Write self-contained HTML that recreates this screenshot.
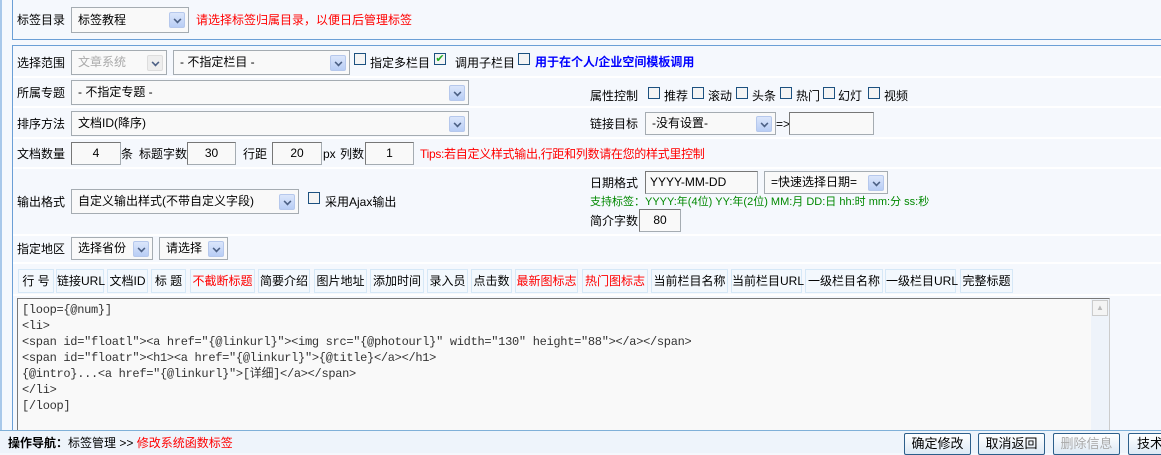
<!DOCTYPE html>
<html><head><meta charset="utf-8"><style>
*{margin:0;padding:0;box-sizing:border-box}
body{width:1161px;height:453px;overflow:hidden;background:#f5f8fd;font:12px "Liberation Sans","WenQuanYi Zen Hei","Noto Sans CJK SC",sans-serif;color:#000;position:relative}
.a{position:absolute;white-space:nowrap;line-height:14px}
.box{position:absolute;border:1px solid #6b9fd6;background:#f5f8fd}
.sel{position:absolute;border:1px solid #a5acb2;background:#f9f9f9;padding:4px 0 0 6px;white-space:nowrap;line-height:15px;overflow:hidden}
.sel i{position:absolute;right:3px;top:50%;margin-top:-8px;width:16px;height:16px;border:1px solid #b6c8ec;background:linear-gradient(#dbe6fb,#b8cdf5);border-radius:2px}
.sel i:after{content:"";position:absolute;left:4px;top:3px;width:5px;height:5px;border-right:2px solid #4d6185;border-bottom:2px solid #4d6185;transform:rotate(45deg) scale(.8)}
.inp{position:absolute;border:1px solid #a5acb2;border-top-color:#777;border-left-color:#777;background:#f9f9f9;text-align:center;line-height:20px}
.cb{position:absolute;width:12px;height:12px;border:1px solid #1c5180;background:#f4f4f4}
.sep{position:absolute;left:13px;right:0;height:2px;background:#fff}
.btn{position:absolute;top:269px;height:24px;border:1px solid #d6e8f7;background:#f3f8fd;line-height:22px;text-align:center;white-space:nowrap}
.bb{position:absolute;top:433px;height:22px;width:67px;border:1px solid #2d5f8b;border-radius:2px;background:linear-gradient(#fff,#dde9f5);text-align:center;line-height:19px;font-size:13px;white-space:nowrap}
.red{color:#f00}
</style></head><body>
<div style="position:absolute;left:0;top:0;width:2px;height:453px;background:#a8c8ea"></div>
<div class="box" style="left:12px;top:-2px;width:1160px;height:42px"></div>
<div class="a" style="left:17px;top:13px">标签目录</div>
<div class="sel" style="left:71px;top:7px;width:118px;height:26px;padding-top:5px">标签教程<i></i></div>
<div class="a red" style="left:196px;top:13px">请选择标签归属目录，以便日后管理标签</div>

<div class="box" style="left:12px;top:45px;width:1160px;height:400px"></div>
<div class="sep" style="top:76px"></div>
<div class="sep" style="top:106px"></div>
<div class="sep" style="top:137px"></div>
<div class="sep" style="top:167px"></div>
<div class="sep" style="top:234px"></div>
<div class="sep" style="top:262px"></div>
<div class="sep" style="top:294px"></div>

<div class="a" style="left:17px;top:56px">选择范围</div>
<div class="sel" style="left:71px;top:50px;width:96px;height:25px;color:#aaa">文章系统<i style="background:#eee;border-color:#ddd"></i></div>
<div class="sel" style="left:173px;top:50px;width:177px;height:25px">- 不指定栏目 -<i></i></div>
<div class="cb" style="left:354px;top:53px"></div><div class="a" style="left:370px;top:56px">指定多栏目</div>
<div class="cb" style="left:434px;top:53px;color:#2a2;font-size:11px;line-height:10px;text-align:center">✔</div><div class="a" style="left:455px;top:56px">调用子栏目</div>
<div class="cb" style="left:518px;top:53px"></div><div class="a" style="left:535px;top:55px;color:#00f;font-weight:bold">用于在个人/企业空间模板调用</div>

<div class="a" style="left:17px;top:86px">所属专题</div>
<div class="sel" style="left:71px;top:80px;width:398px;height:25px">- 不指定专题 -<i></i></div>
<div class="a" style="left:590px;top:89px">属性控制</div>
<div class="cb" style="left:648px;top:87px"></div><div class="a" style="left:664px;top:89px">推荐</div>
<div class="cb" style="left:692px;top:87px"></div><div class="a" style="left:708px;top:89px">滚动</div>
<div class="cb" style="left:736px;top:87px"></div><div class="a" style="left:752px;top:89px">头条</div>
<div class="cb" style="left:780px;top:87px"></div><div class="a" style="left:796px;top:89px">热门</div>
<div class="cb" style="left:823px;top:87px"></div><div class="a" style="left:838px;top:89px">幻灯</div>
<div class="cb" style="left:868px;top:87px"></div><div class="a" style="left:884px;top:89px">视频</div>

<div class="a" style="left:17px;top:117px">排序方法</div>
<div class="sel" style="left:71px;top:111px;width:398px;height:25px">文档ID(降序)<i></i></div>
<div class="a" style="left:590px;top:117px">链接目标</div>
<div class="sel" style="left:645px;top:112px;width:131px;height:23px;padding-top:3px">-没有设置-<i></i></div>
<div class="a" style="left:776px;top:117px">=&gt;</div>
<div class="inp" style="left:789px;top:112px;width:85px;height:23px"></div>

<div class="a" style="left:17px;top:147px">文档数量</div>
<div class="inp" style="left:71px;top:142px;width:50px;height:23px">4</div>
<div class="a" style="left:121px;top:147px">条</div>
<div class="a" style="left:139px;top:147px">标题字数</div>
<div class="inp" style="left:187px;top:142px;width:49px;height:23px">30</div>
<div class="a" style="left:243px;top:147px">行距</div>
<div class="inp" style="left:272px;top:142px;width:50px;height:23px">20</div>
<div class="a" style="left:323px;top:147px">px</div>
<div class="a" style="left:340px;top:147px">列数</div>
<div class="inp" style="left:365px;top:142px;width:49px;height:23px">1</div>
<div class="a red" style="left:420px;top:147px;letter-spacing:-0.3px">Tips:若自定义样式输出,行距和列数请在您的样式里控制</div>

<div class="a" style="left:590px;top:176px">日期格式</div>
<div class="inp" style="left:645px;top:171px;width:113px;height:23px;text-align:left;padding-left:4px">YYYY-MM-DD</div>
<div class="sel" style="left:764px;top:171px;width:124px;height:23px;padding-top:3px">=快速选择日期=<i></i></div>
<div class="a" style="left:590px;top:195px;color:#080;font-size:11px">支持标签：YYYY:年(4位) YY:年(2位) MM:月 DD:日 hh:时 mm:分 ss:秒</div>
<div class="a" style="left:590px;top:214px">简介字数</div>
<div class="inp" style="left:639px;top:209px;width:42px;height:23px">80</div>
<div class="a" style="left:17px;top:195px">输出格式</div>
<div class="sel" style="left:71px;top:189px;width:228px;height:25px">自定义输出样式(不带自定义字段)<i></i></div>
<div class="cb" style="left:308px;top:192px"></div><div class="a" style="left:325px;top:195px">采用Ajax输出</div>

<div class="a" style="left:17px;top:242px">指定地区</div>
<div class="sel" style="left:71px;top:237px;width:82px;height:23px;padding-top:3px">选择省份<i></i></div>
<div class="sel" style="left:159px;top:237px;width:69px;height:23px;padding-top:3px">请选择<i></i></div>

<div class="btn" style="left:18px;width:36px">行 号</div>
<div class="btn" style="left:56px;width:48px">链接URL</div>
<div class="btn" style="left:107px;width:41px">文档ID</div>
<div class="btn" style="left:151px;width:35px">标 题</div>
<div class="btn red" style="left:190px;width:65px">不截断标题</div>
<div class="btn" style="left:258px;width:52px">简要介绍</div>
<div class="btn" style="left:314px;width:53px">图片地址</div>
<div class="btn" style="left:370px;width:54px">添加时间</div>
<div class="btn" style="left:427px;width:41px">录入员</div>
<div class="btn" style="left:471px;width:41px">点击数</div>
<div class="btn red" style="left:515px;width:63px">最新图标志</div>
<div class="btn red" style="left:582px;width:66px">热门图标志</div>
<div class="btn" style="left:651px;width:77px">当前栏目名称</div>
<div class="btn" style="left:731px;width:71px">当前栏目URL</div>
<div class="btn" style="left:805px;width:78px">一级栏目名称</div>
<div class="btn" style="left:885px;width:71px">一级栏目URL</div>
<div class="btn" style="left:960px;width:53px">完整标题</div>

<div style="position:absolute;left:17px;top:298px;width:1093px;height:140px;border:1px solid #777;border-right-color:#ccc;background:#f9f9f9;padding:3px 0 0 4px;font:12px/16px 'Liberation Mono','WenQuanYi Zen Hei',monospace;letter-spacing:-0.3px;white-space:pre;color:#333">[loop={@num}]
&lt;li&gt;
&lt;span id="floatl"&gt;&lt;a href="{@linkurl}"&gt;&lt;img src="{@photourl}" width="130" height="88"&gt;&lt;/a&gt;&lt;/span&gt;
&lt;span id="floatr"&gt;&lt;h1&gt;&lt;a href="{@linkurl}"&gt;{@title}&lt;/a&gt;&lt;/h1&gt;
{@intro}...&lt;a href="{@linkurl}"&gt;[详细]&lt;/a&gt;&lt;/span&gt;
&lt;/li&gt;
[/loop]</div>
<div style="position:absolute;left:1091px;top:299px;width:18px;height:132px;background:#eef3fa"></div>
<div style="position:absolute;left:1092px;top:300px;width:16px;height:16px;border:1px solid #ccc;background:#f4f4f4;color:#bbb;font-size:8px;text-align:center;line-height:14px">▲</div>

<div style="position:absolute;left:0;top:430px;width:1161px;height:23px;background:#eef4fb;border-top:1px solid #7fb0d8"></div>
<div class="a" style="left:8px;top:436px"><b>操作导航：</b>标签管理 &gt;&gt; <span class="red">修改系统函数标签</span></div>
<div class="bb" style="left:904px">确定修改</div>
<div class="bb" style="left:978px">取消返回</div>
<div class="bb" style="left:1053px;color:#aaa">删除信息</div>
<div class="bb" style="left:1128px;width:60px;text-align:left;padding-left:8px">技术</div>
</body></html>
